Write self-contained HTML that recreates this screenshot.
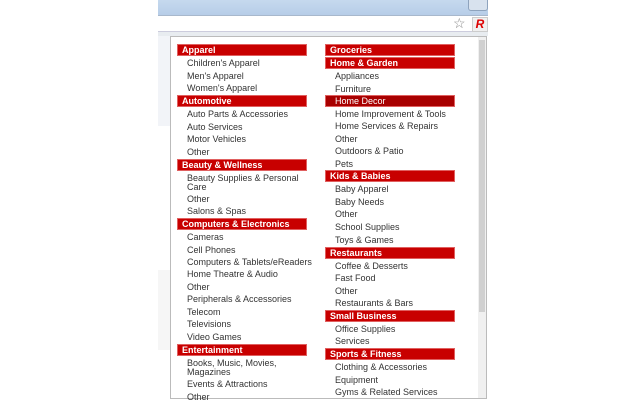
<!DOCTYPE html>
<html><head><meta charset="utf-8"><style>
*{margin:0;padding:0;box-sizing:border-box}
body{width:640px;height:400px;background:#fff;position:relative;overflow:hidden;font-family:"Liberation Sans",sans-serif}
.a{position:absolute}
.h{position:absolute;height:12px;line-height:11px;background:#c80000;border:1px solid #e06060;color:#fff;font-weight:bold;font-size:9px;padding-left:4px;width:130px}
.i{position:absolute;font-size:9px;color:#333;line-height:9px;white-space:nowrap}
</style></head><body>
<div class="a" style="left:158px;top:0;width:330px;height:15px;background:linear-gradient(#c6d9ee,#b7cde8)"></div>
<div class="a" style="left:468px;top:0;width:20px;height:11px;background:#d8e2ee;border:1px solid #8ea3bd;border-top:none;border-radius:0 0 3px 3px"></div>
<div class="a" style="left:158px;top:15px;width:330px;height:17px;background:#fff;border-top:1px solid #a8b8cc;border-bottom:1px solid #ccd"></div>
<div class="a" style="left:453px;top:15px;font-size:14px;color:#888">☆</div>
<div class="a" style="left:472px;top:17px;width:16px;height:15px;background:#f0f0f0;border:1px solid #ccc;color:#d00;font-weight:bold;font-style:italic;font-size:12px;line-height:13px;text-align:center">R</div>
<div class="a" style="left:158px;top:32px;width:330px;height:4px;background:#e8ecf0"></div>
<div class="a" style="left:158px;top:36px;width:12px;height:90px;background:#f2f4f8"></div>
<div class="a" style="left:158px;top:270px;width:12px;height:80px;background:#f6f6f6"></div>
<div class="a" style="left:170px;top:36px;width:317px;height:363px;background:#fff;border:1px solid #bbb"></div>
<div class="a" style="left:478px;top:37px;width:8px;height:361px;background:#f0f0f0"></div>
<div class="a" style="left:479px;top:40px;width:6px;height:272px;background:#d0d0d0"></div>

<div class="h" style="left:177px;top:44px">Apparel</div>
<div class="i" style="left:187px;top:59px">Children's Apparel</div>
<div class="i" style="left:187px;top:72px">Men's Apparel</div>
<div class="i" style="left:187px;top:84px">Women's Apparel</div>
<div class="h" style="left:177px;top:95px">Automotive</div>
<div class="i" style="left:187px;top:110px">Auto Parts &amp; Accessories</div>
<div class="i" style="left:187px;top:123px">Auto Services</div>
<div class="i" style="left:187px;top:135px">Motor Vehicles</div>
<div class="i" style="left:187px;top:148px">Other</div>
<div class="h" style="left:177px;top:159px">Beauty &amp; Wellness</div>
<div class="i" style="left:187px;top:174px">Beauty Supplies &amp; Personal<br>Care</div>
<div class="i" style="left:187px;top:195px">Other</div>
<div class="i" style="left:187px;top:207px">Salons &amp; Spas</div>
<div class="h" style="left:177px;top:218px">Computers &amp; Electronics</div>
<div class="i" style="left:187px;top:233px">Cameras</div>
<div class="i" style="left:187px;top:246px">Cell Phones</div>
<div class="i" style="left:187px;top:258px">Computers &amp; Tablets/eReaders</div>
<div class="i" style="left:187px;top:270px">Home Theatre &amp; Audio</div>
<div class="i" style="left:187px;top:283px">Other</div>
<div class="i" style="left:187px;top:295px">Peripherals &amp; Accessories</div>
<div class="i" style="left:187px;top:308px">Telecom</div>
<div class="i" style="left:187px;top:320px">Televisions</div>
<div class="i" style="left:187px;top:333px">Video Games</div>
<div class="h" style="left:177px;top:344px">Entertainment</div>
<div class="i" style="left:187px;top:359px">Books, Music, Movies,<br>Magazines</div>
<div class="i" style="left:187px;top:380px">Events &amp; Attractions</div>
<div class="i" style="left:187px;top:393px">Other</div>

<div class="h" style="left:325px;top:44px">Groceries</div>
<div class="h" style="left:325px;top:57px">Home &amp; Garden</div>
<div class="i" style="left:335px;top:72px">Appliances</div>
<div class="i" style="left:335px;top:85px">Furniture</div>
<div class="h" style="left:325px;top:95px;background:#a80000;font-weight:normal;padding-left:9px">Home Decor</div>
<div class="i" style="left:335px;top:110px">Home Improvement &amp; Tools</div>
<div class="i" style="left:335px;top:122px">Home Services &amp; Repairs</div>
<div class="i" style="left:335px;top:135px">Other</div>
<div class="i" style="left:335px;top:147px">Outdoors &amp; Patio</div>
<div class="i" style="left:335px;top:160px">Pets</div>
<div class="h" style="left:325px;top:170px">Kids &amp; Babies</div>
<div class="i" style="left:335px;top:185px">Baby Apparel</div>
<div class="i" style="left:335px;top:198px">Baby Needs</div>
<div class="i" style="left:335px;top:210px">Other</div>
<div class="i" style="left:335px;top:223px">School Supplies</div>
<div class="i" style="left:335px;top:236px">Toys &amp; Games</div>
<div class="h" style="left:325px;top:247px">Restaurants</div>
<div class="i" style="left:335px;top:262px">Coffee &amp; Desserts</div>
<div class="i" style="left:335px;top:274px">Fast Food</div>
<div class="i" style="left:335px;top:287px">Other</div>
<div class="i" style="left:335px;top:299px">Restaurants &amp; Bars</div>
<div class="h" style="left:325px;top:310px">Small Business</div>
<div class="i" style="left:335px;top:325px">Office Supplies</div>
<div class="i" style="left:335px;top:337px">Services</div>
<div class="h" style="left:325px;top:348px">Sports &amp; Fitness</div>
<div class="i" style="left:335px;top:363px">Clothing &amp; Accessories</div>
<div class="i" style="left:335px;top:376px">Equipment</div>
<div class="i" style="left:335px;top:388px">Gyms &amp; Related Services</div>
</body></html>
